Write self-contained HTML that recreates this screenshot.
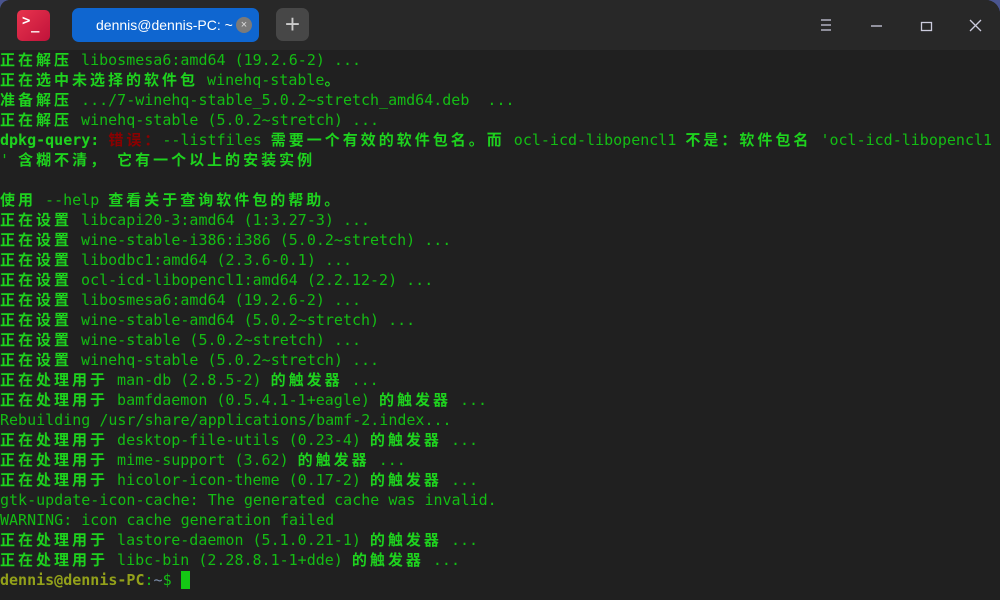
<!DOCTYPE html>
<html><head><meta charset="utf-8"><style>
html,body{margin:0;padding:0;width:1000px;height:600px;overflow:hidden;background:#4a5590;}
.win{position:absolute;left:0;top:0;width:1000px;height:600px;background:#202020;border-radius:10px 14px 0 0;overflow:hidden;}
.tb{position:absolute;left:0;top:0;width:1000px;height:50px;background:#282828;}
.logo{position:absolute;left:17px;top:10px;width:33px;height:31px;border-radius:5px;background:linear-gradient(135deg,#e8344e,#c0123a);color:#fff;font:bold 14px "DejaVu Sans Mono",monospace;}
.tab{position:absolute;left:72px;top:8px;width:187px;height:34px;border-radius:7px;background:#0f66d0;color:#fff;font:14px "Liberation Sans",sans-serif;line-height:34px;}
.tab span{position:absolute;left:24px;}
.tab i{position:absolute;left:164px;top:9px;width:16px;height:16px;border-radius:50%;background:#7a7a7a;color:#ddd;font:normal 11px sans-serif;line-height:16px;text-align:center;}
.plus{position:absolute;left:276px;top:8px;width:33px;height:33px;border-radius:7px;background:#474747;color:#ccc;font:26px "Liberation Sans",sans-serif;text-align:center;line-height:32px;}
.t{position:absolute;left:0;top:50px;font:15px "DejaVu Sans Mono",monospace;color:#14bc14;line-height:20px;}
.t div{height:20px;white-space:pre;}
b{font-family:"Noto Sans CJK SC",sans-serif;font-weight:bold;letter-spacing:3px;color:#1ed21e;}
.e{color:#8b0000;}
.p{color:#93a11a;font-weight:bold;}
</style></head><body><div class="win">
<div class="tb">
<div class="logo"><span style="position:absolute;left:5px;top:3px">&gt;</span><span style="position:absolute;left:14px;top:7px">_</span></div>
<div class="tab"><span>dennis@dennis-PC: ~</span><i>×</i></div>
<div class="plus">+</div>
<svg style="position:absolute;left:800px;top:0" width="200" height="50">
<g stroke="#ccd" stroke-width="1.3" fill="none">
<path d="M21 20h10M21 25h10M21 30h10"/>
<path d="M71 26h11"/>
<rect x="121.5" y="22.5" width="10" height="8"/>
<path d="M170 20l11 11M181 20l-11 11"/>
</g></svg>
</div>
<div class="t"><div><b>正在解压</b> libosmesa6:amd64 (19.2.6-2) ...</div><div><b>正在选中未选择的软件包</b> winehq-stable<b>。</b></div><div><b>准备解压</b> .../7-winehq-stable_5.0.2~stretch_amd64.deb  ...</div><div><b>正在解压</b> winehq-stable (5.0.2~stretch) ...</div><div><span style="font-weight:bold;color:#1ed21e">dpkg-query:</span> <b class="e">错误：</b>--listfiles <b>需要一个有效的软件包名。而</b> ocl-icd-libopencl1 <b>不是：软件包名</b> 'ocl-icd-libopencl1</div><div>' <b>含糊不清，</b> <b>它有一个以上的安装实例</b></div><div></div><div><b>使用</b> --help <b>查看关于查询软件包的帮助。</b></div><div><b>正在设置</b> libcapi20-3:amd64 (1:3.27-3) ...</div><div><b>正在设置</b> wine-stable-i386:i386 (5.0.2~stretch) ...</div><div><b>正在设置</b> libodbc1:amd64 (2.3.6-0.1) ...</div><div><b>正在设置</b> ocl-icd-libopencl1:amd64 (2.2.12-2) ...</div><div><b>正在设置</b> libosmesa6:amd64 (19.2.6-2) ...</div><div><b>正在设置</b> wine-stable-amd64 (5.0.2~stretch) ...</div><div><b>正在设置</b> wine-stable (5.0.2~stretch) ...</div><div><b>正在设置</b> winehq-stable (5.0.2~stretch) ...</div><div><b>正在处理用于</b> man-db (2.8.5-2) <b>的触发器</b> ...</div><div><b>正在处理用于</b> bamfdaemon (0.5.4.1-1+eagle) <b>的触发器</b> ...</div><div>Rebuilding /usr/share/applications/bamf-2.index...</div><div><b>正在处理用于</b> desktop-file-utils (0.23-4) <b>的触发器</b> ...</div><div><b>正在处理用于</b> mime-support (3.62) <b>的触发器</b> ...</div><div><b>正在处理用于</b> hicolor-icon-theme (0.17-2) <b>的触发器</b> ...</div><div>gtk-update-icon-cache: The generated cache was invalid.</div><div>WARNING: icon cache generation failed</div><div><b>正在处理用于</b> lastore-daemon (5.1.0.21-1) <b>的触发器</b> ...</div><div><b>正在处理用于</b> libc-bin (2.28.8.1-1+dde) <b>的触发器</b> ...</div><div><span class="p">dennis@dennis-PC</span>:<span style="color:#7a8ca8">~</span>$ <span style="display:inline-block;width:9px;height:18px;background:#14c814;vertical-align:-4px"></span></div></div>
</div></body></html>
